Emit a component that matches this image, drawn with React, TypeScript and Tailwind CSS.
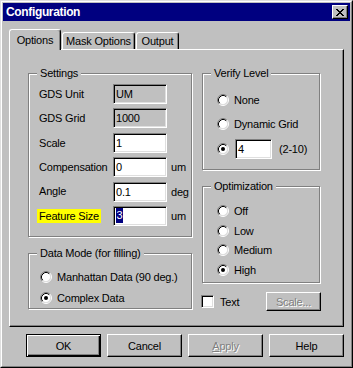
import React from "react";

function Radio({ checked }: { checked?: boolean }) {
  return (
    <svg width="12" height="12" viewBox="0 0 12 12" className="shrink-0">
      <circle cx="6" cy="6" r="4.5" fill="#fff" />
      <path d="M9.89 2.11 A5.5 5.5 0 0 0 2.11 9.89" stroke="#808080" fill="none" />
      <path d="M2.11 9.89 A5.5 5.5 0 0 0 9.89 2.11" stroke="#fff" fill="none" />
      <path d="M9.18 2.82 A4.5 4.5 0 0 0 2.82 9.18" stroke="#000" fill="none" />
      <path d="M2.82 9.18 A4.5 4.5 0 0 0 9.18 2.82" stroke="#dfdfdf" fill="none" />
      {checked && <circle cx="6" cy="6" r="2" fill="#000" />}
    </svg>
  );
}

function RadioRow({ label, checked, h = "h-[20px]" }: { label: string; checked?: boolean; h?: string }) {
  return (
    <div className={`flex items-center gap-[5px] ${h}`}>
      <Radio checked={checked} />
      <span className="leading-[14px]">{label}</span>
    </div>
  );
}

function Group({ title, className, children }: { title: string; className: string; children?: React.ReactNode }) {
  return (
    <div className={`relative border border-[#808080] shadow-[inset_1px_1px_#fff,1px_1px_#fff] ${className}`}>
      <span className="absolute -top-[8px] left-[8px] bg-[#c0c0c0] px-[3px] leading-[14px]">{title}</span>
      {children}
    </div>
  );
}

function Edit({ children, gray, w = "w-[54px]", h = "h-[20px]" }: { children?: React.ReactNode; gray?: boolean; w?: string; h?: string }) {
  return (
    <div
      className={`${w} ${h} shrink-0 flex items-center pl-[2px] border border-t-[#808080] border-l-[#808080] border-r-white border-b-white shadow-[inset_1px_1px_#000,inset_-1px_-1px_#dfdfdf] ${
        gray ? "bg-[#c0c0c0]" : "bg-white"
      }`}
    >
      {children}
    </div>
  );
}

function Button({
  children,
  def,
  disabled,
  className = "w-[75px] h-[23px]",
}: {
  children: React.ReactNode;
  def?: boolean;
  disabled?: boolean;
  className?: string;
}) {
  const base = def
    ? "border border-black shadow-[inset_1px_1px_#fff,inset_-1px_-1px_#000,inset_-2px_-2px_#808080]"
    : "border border-t-white border-l-white border-r-black border-b-black shadow-[inset_-1px_-1px_#808080]";
  return (
    <div
      className={`${className} ${base} flex items-center justify-center bg-[#c0c0c0] ${
        disabled ? "text-[#808080] [text-shadow:1px_1px_0_#fff]" : "text-black"
      }`}
    >
      {children}
    </div>
  );
}

function Tab({ label, selected, w }: { label: string; selected?: boolean; w: string }) {
  return (
    <div
      className={`${w} ${
        selected ? "h-[21px] -mb-[1px] relative z-10" : "h-[17px]"
      } flex items-center justify-center bg-[#c0c0c0] border-t border-l border-r border-t-white border-l-white border-r-black shadow-[inset_-1px_0_#808080] rounded-t-[3px] leading-[14px]`}
    >
      {label}
    </div>
  );
}

function SettingRow({ label, children, unit, highlight }: { label: string; children: React.ReactNode; unit?: string; highlight?: boolean }) {
  return (
    <div className="flex items-center h-[20px]">
      <div className="w-[74px] shrink-0">
        {highlight ? (
          <span className="bg-[#ffff00] -ml-[2px] px-[2px] leading-[14px] inline-block">{label}</span>
        ) : (
          <span className="leading-[14px]">{label}</span>
        )}
      </div>
      {children}
      {unit && <span className="ml-[4px] leading-[14px]">{unit}</span>}
    </div>
  );
}

export default function App() {
  return (
    <div className="w-[353px] h-[368px] bg-[#c0c0c0] font-['Liberation_Sans',Arial,sans-serif] text-[11px] tracking-[-0.2px] text-black border border-t-[#dfdfdf] border-l-[#dfdfdf] border-r-black border-b-black">
      <div className="w-full h-full p-[1px] border border-t-white border-l-white border-r-[#808080] border-b-[#808080] flex flex-col">
        {/* Title bar */}
        <div className="h-[18px] bg-[#000080] flex items-center justify-between pl-[3px] pr-[2px] shrink-0">
          <span className="text-white font-bold text-[12px] tracking-[-0.35px] leading-[14px]">Configuration</span>
          <div className="w-[16px] h-[14px] bg-[#c0c0c0] border border-t-white border-l-white border-r-black border-b-black shadow-[inset_-1px_-1px_#808080] flex items-center justify-center">
            <svg width="8" height="7" viewBox="0 0 8 7">
              <path d="M0 0h2v1h-2z M6 0h2v1h-2z M1 1h2v1h-2z M5 1h2v1h-2z M2 2h4v1h-4z M3 3h2v1h-2z M2 4h4v1h-4z M1 5h2v1h-2z M5 5h2v1h-2z M0 6h2v1h-2z M6 6h2v1h-2z" fill="#000" />
            </svg>
          </div>
        </div>

        {/* Tabs */}
        <div className="flex items-end ml-[6px] mt-[8px] h-[20px] shrink-0">
          <Tab label="Options" selected w="w-[52px]" />
          <div className="w-[1px]" />
          <Tab label="Mask Options" w="w-[73px]" />
          <div className="w-[1px]" />
          <Tab label="Output" w="w-[43px]" />
        </div>

        {/* Panel */}
        <div className="mx-[6px] h-[278px] shrink-0 border border-t-white border-l-white border-r-black border-b-black shadow-[inset_-1px_-1px_#808080] pl-[18px] pt-[23px] flex gap-[10px]">
          {/* Left column */}
          <div className="w-[164px] flex flex-col gap-[16px]">
            <Group title="Settings" className="h-[164px] pt-[10px] pl-[10px]">
              <div className="flex flex-col gap-[4.4px]">
                <SettingRow label="GDS Unit">
                  <Edit gray>
                    <span className="leading-[14px]">UM</span>
                  </Edit>
                </SettingRow>
                <SettingRow label="GDS Grid">
                  <Edit gray>
                    <span className="leading-[14px]">1000</span>
                  </Edit>
                </SettingRow>
                <SettingRow label="Scale">
                  <Edit>
                    <span className="leading-[14px]">1</span>
                  </Edit>
                </SettingRow>
                <SettingRow label="Compensation" unit="um">
                  <Edit>
                    <span className="leading-[14px]">0</span>
                  </Edit>
                </SettingRow>
                <SettingRow label="Angle" unit="deg">
                  <Edit>
                    <span className="leading-[14px]">0.1</span>
                  </Edit>
                </SettingRow>
                <SettingRow label="Feature Size" unit="um" highlight>
                  <Edit>
                    <span className="bg-[#000080] text-white h-[15px] leading-[15px] px-[0.5px] inline-block">3</span>
                  </Edit>
                </SettingRow>
              </div>
            </Group>
            <Group title="Data Mode (for filling)" className="h-[56px] pt-[13px] pl-[11px]">
              <div className="flex flex-col gap-[1px]">
                <RadioRow label="Manhattan Data (90 deg.)" />
                <RadioRow label="Complex Data" checked />
              </div>
            </Group>
          </div>

          {/* Right column */}
          <div className="w-[118px] flex flex-col">
            <Group title="Verify Level" className="h-[97px] pt-[16px] pl-[14px]">
              <div className="flex flex-col gap-[4px]">
                <RadioRow label="None" />
                <RadioRow label="Dynamic Grid" />
                <div className="flex items-center h-[20px] mt-[1px]">
                  <Radio checked />
                  <div className="ml-[6px]">
                    <Edit w="w-[37px]" h="h-[20px]">
                      <span className="leading-[14px]">4</span>
                    </Edit>
                  </div>
                  <span className="ml-[7px] leading-[14px]">(2-10)</span>
                </div>
              </div>
            </Group>
            <Group title="Optimization" className="h-[97px] mt-[16px] pt-[14px] pl-[14px]">
              <div className="flex flex-col">
                <RadioRow label="Off" h="h-[19.7px]" />
                <RadioRow label="Low" h="h-[19.7px]" />
                <RadioRow label="Medium" h="h-[19.7px]" />
                <RadioRow label="High" checked h="h-[19.7px]" />
              </div>
            </Group>
            <div className="flex items-center -ml-[1px] w-[120px] h-[19px] mt-[9px]">
              <div className="w-[13px] h-[13px] bg-white border border-t-[#808080] border-l-[#808080] border-r-white border-b-white shadow-[inset_1px_1px_#000,inset_-1px_-1px_#dfdfdf]" />
              <span className="ml-[6px] leading-[14px]">Text</span>
              <div className="ml-auto">
                <Button disabled className="w-[55px] h-[19px]">
                  <span className="leading-[14px]">Scale...</span>
                </Button>
              </div>
            </div>
          </div>
        </div>

        {/* Buttons */}
        <div className="flex justify-end gap-[6px] pr-[6px] mt-[7px]">
          <Button def>
            <span className="leading-[14px]">OK</span>
          </Button>
          <Button>
            <span className="leading-[14px]">Cancel</span>
          </Button>
          <Button disabled>
            <span className="leading-[14px]">
              <span className="underline">A</span>pply
            </span>
          </Button>
          <Button>
            <span className="leading-[14px]">Help</span>
          </Button>
        </div>
      </div>
    </div>
  );
}
